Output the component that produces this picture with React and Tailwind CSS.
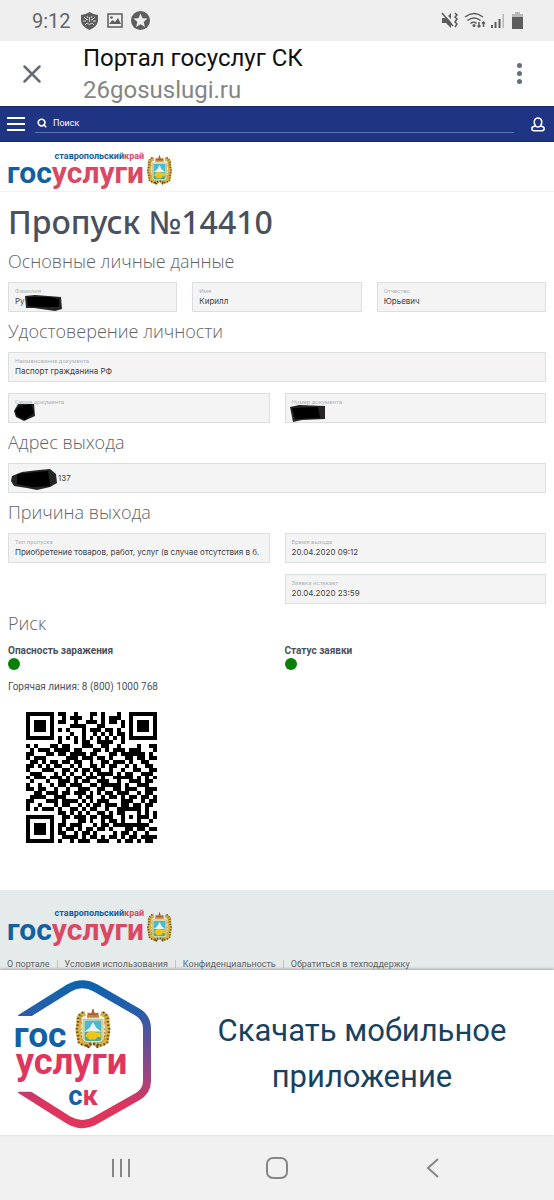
import { Search, X } from 'lucide-react'

const qrRows = [
  '111111101100100011010001001111111',
  '100000100101110010010111001000001',
  '101110101100100111010110101011101',
  '101110100001111000110000101011101',
  '101110101010001011101101001011101',
  '100000100001001001010101101000001',
  '111111101010101010101010101111111',
  '000000001000101100111100100000000',
  '101000110110001110011001000010011',
  '010111011110110001101011101110001',
  '110001101101111011000110111111010',
  '101110000011101110110100011011011',
  '011010110110110010011011101001100',
  '110101011001010011010110010100110',
  '100011100110101101100100100110011',
  '011100010101001010111101011001110',
  '101110111010110111010011111010101',
  '010001001110101100111001001110110',
  '100100101101110011011111010011100',
  '110110010010011100110011011100111',
  '001101110110111010101101110010110',
  '011110011100010110010110101101101',
  '110001110111101010111000111001011',
  '100100010110010101101110110110110',
  '101011101001101011001001111110100',
  '000000001101010100110101100010101',
  '111111100110111011011100101011101',
  '100000100100011010010110100010010',
  '101110101101110001011011111111100',
  '101110101011010110110100011011011',
  '101110101100101101000010110100100',
  '100000100111101011010110101101111',
  '111111101001011100111001011010110',
]

const links = ['О портале', 'Условия использования', 'Конфиденциальность', 'Обратиться в техподдержку']

function Emblem({ className, x, y, width, height }) {
  return (
    <svg className={className} x={x} y={y} width={width} height={height} viewBox="2 1 46 57" preserveAspectRatio="none" aria-hidden="true">
      <g fill="none" stroke="#d9b24a" strokeWidth="7">
        <path d="M15 8C2 11 9 20 6 27C4 35 8 41 8 46C10 53 16 50 22 55" />
        <path d="M35 8C48 11 41 20 44 27C46 35 42 41 42 46C40 53 34 50 28 55" />
      </g>
      <g fill="none" stroke="#5a4a20" strokeWidth="3" strokeDasharray="2 3">
        <path d="M12 6C2 12 8 20 4 27C3 35 8 41 5 47C9 54 15 51 21 57" />
        <path d="M38 6C48 12 42 20 46 27C47 35 42 41 45 47C41 54 35 51 29 57" />
      </g>
      <path d="M10 10q-3 6 0 12M40 10q3 6 0 12M10 29v16M40 29v16" fill="none" stroke="#8a6d25" strokeDasharray="3 2" />
      <path d="M17 14l1-8 4 2 3-6 3 6 4-2 1 8z" fill="#c4823b" />
      <path d="M19 9h12M25 2v5" stroke="#a75635" strokeWidth="2" />
      <path d="M12 16h26v29q0 4-5 4h-5l-3 3-3-3h-5q-5 0-5-4z" fill="#f5edb4" stroke="#a9974c" />
      <path d="M14 18h22v16H14z" fill="#4cb8d2" />
      <path d="M14 34l7-6 4-8 4 8 7 6z" fill="#e7f5ee" />
      <path d="M14 34h22v11q0 2-4 2H18q-4 0-4-2z" fill="#49ad96" />
      <path d="M15 40l3-5 5-2 6 2h6v7l-4-1-3 4h-8l-2-3z" fill="#f1c418" />
      <path d="M16 55q9-8 18 0" fill="none" stroke="#6c5139" strokeWidth="4" strokeDasharray="3 2" />
    </svg>
  )
}

function Logo() {
  return (
    <a href="#" className="flex items-end font-[Roboto,sans-serif] font-bold">
      <span className="flex flex-col items-end">
        <span className="text-[9px] leading-[9px] text-[#14609f]">
          ставропольский<span className="text-[#da4863]">край</span>
        </span>
        <span className="text-[30px] leading-[24px] text-[#14609f]">
          гос<span className="text-[#da4863]">услуги</span>
        </span>
      </span>
      <Emblem className="w-[25px] h-[30px] ml-[3px]" />
    </a>
  )
}

function Scribble({ className, d, inner }) {
  return (
    <svg className={`absolute ${className}`} aria-hidden="true">
      <path d={d} fill="#252525" />
      <path d={inner} fill="#000" />
    </svg>
  )
}

function Field({ id, label, value, inputClass = '', children }) {
  return (
    <div className="relative h-[30px] border border-[#dcdfdf] bg-[#f4f4f4] pl-[6px] pr-1 flex flex-col justify-center">
      {label && <label htmlFor={id} className="text-[6px] leading-[8px] text-[#b0b4b8]">{label}</label>}
      <input
        id={id}
        aria-label={label ? undefined : 'Адрес выхода'}
        readOnly
        defaultValue={value}
        className={`w-full min-w-0 h-3 font-[Inter,sans-serif] text-[8px] leading-3 text-[#3f4246] bg-transparent outline-none ${inputClass}`}
      />
      {children}
    </div>
  )
}

function Heading({ children }) {
  return <h2 className="h-10 leading-[38px] font-['Open_Sans',sans-serif] font-light text-[18px] text-[#626469]">{children}</h2>
}

function StatusBar() {
  return (
    <div className="h-[41px] bg-[#efefef] text-[#5d5d5d] flex items-center pl-8 pr-[31px]">
      <span className="text-[20px] text-[#666]">9:12</span>
      <svg className="w-[17px] h-[18px] ml-[10px]" viewBox="0 0 17 18" aria-hidden="true">
        <path d="M8.500 0Q12 2.500 17 3v6q-1 6-8.500 9Q1 15 0 9V3q5-.5 8.500-3z" fill="currentColor" />
        <g fill="none" stroke="#efefef" strokeWidth="0.800">
          <path d="M3 5l3 3M14 5l-3 3M2 9h3M15 9h-3M4 13l2-2M13 13l-2-2M6 4l1 2M11 4l-1 2" />
          <path d="M5 7l2 1M12 7l-2 1M6 11q2.500 3 5 0M8.500 5v5" />
        </g>
      </svg>
      <svg className="w-4 h-[15px] ml-[9px]" viewBox="0 0 16 15" aria-hidden="true">
        <path d="M1 1h14v13H1z" fill="none" stroke="currentColor" strokeWidth="1.500" />
        <path d="M2 11l3.500-4 2.500 2 3-4 3 6z" fill="currentColor" />
        <circle cx="4.500" cy="4.500" r="1.300" fill="currentColor" />
      </svg>
      <svg className="w-[19px] h-[19px] ml-2" viewBox="0 0 19 19" aria-hidden="true">
        <circle cx="9.500" cy="9.500" r="9.500" fill="currentColor" />
        <path d="M9.500 2.500l2 4.700 5 .4-3.800 3.300 1.200 5-4.400-2.700-4.400 2.700 1.200-5-3.800-3.300 5-.4z" fill="#efefef" />
      </svg>
      <svg className="w-[82px] h-[18px] ml-auto" viewBox="0 0 82 18" aria-hidden="true">
        <path d="M1 6h4l5-5v15l-5-5H1z" fill="currentColor" />
        <path d="M2 0l13 14" stroke="#efefef" strokeWidth="2" />
        <g fill="none" stroke="currentColor" strokeWidth="1.500">
          <path d="M1 1l11 13M14 1l2 2-2 2 2 2-2 3 2 2-2 3" />
          <path d="M24 5q9-7 18 0M26.500 8.500q6.500-5 13 0M29.500 11.500q3.500-2.500 6 0" />
          <path d="M38 10v5M36.500 13.500L38 15l1.500-1.500M42.500 15v-5M41 11.500l1.500-1.500 1.500 1.500" />
        </g>
        <circle cx="33" cy="13.500" r="1.500" fill="currentColor" />
        <path d="M50 13h2v3h-2zM53.500 10h2v6h-2zM57.500 7h2v9h-2zM71 5h11v12H71z" fill="currentColor" />
        <path d="M61.500 2h1.500v14h-1.500zM74 0h5v2h3v3H71V2h3z" fill="#b8b8b8" />
      </svg>
    </div>
  )
}

function QrCode() {
  return (
    <svg className="w-[131px] h-[131px]" viewBox="0 0 33 33" shapeRendering="crispEdges" role="img">
      {qrRows.map((row, y) =>
        row.split('').map((cell, x) => cell === '1' && <rect key={`${x}-${y}`} x={x} y={y} width="1" height="1" />)
      )}
    </svg>
  )
}

function AppIcon() {
  return (
    <svg className="w-[170px] h-[165px] flex-shrink-0" viewBox="0 12 510 495" aria-hidden="true">
      <defs>
        <linearGradient id="hex" gradientUnits="userSpaceOnUse" x1="0" y1="48" x2="0" y2="485">
          <stop offset="0" stopColor="#0d63ad" />
          <stop offset="0.200" stopColor="#275ea9" />
          <stop offset="0.650" stopColor="#a1447f" />
          <stop offset="0.850" stopColor="#dd355d" />
          <stop offset="1" stopColor="#e0355c" />
        </linearGradient>
        <clipPath id="cut">
          <path d="M0 0h510v510H0V377h130V150H0z" />
        </clipPath>
      </defs>
      <path
        d="M60 158L207 66Q247 43 287 66L412 138Q441 155 441 188V345Q441 376 412 392L287 463Q247 486 207 463L60 370"
        fill="none" stroke="url(#hex)" strokeWidth="24" clipPath="url(#cut)"
      />
      <Emblem x="226" y="128" width="106" height="120" />
      <g className="font-[Roboto,sans-serif] font-bold">
        <text x="41" y="242" fontSize="106" fill="#1261a6">гос</text>
        <text x="47" y="325" fontSize="109" fill="#e0355c">услуги</text>
        <text x="205" y="418" fontSize="82" fill="#1261a6">с<tspan fill="#e0355c">к</tspan></text>
      </g>
    </svg>
  )
}

export default function App() {
  return (
    <div className="min-h-screen flex flex-col bg-white font-[Roboto,sans-serif]">
      <StatusBar />

      <header className="h-[65px] flex items-center pl-5 pr-6">
        <button aria-label="Закрыть" className="text-[#656e78]">
          <X className="w-6 h-6 scale-125" strokeWidth={2} />
        </button>
        <div className="ml-[39px]">
          <p className="text-[24px] leading-8 text-[#111]">Портал госуслуг СК</p>
          <p className="text-[24px] leading-8 text-[#858585]">26gosuslugi.ru</p>
        </div>
        <button aria-label="Меню браузера" className="ml-auto flex flex-col gap-[3px] p-2">
          {[0, 1, 2].map((i) => <span key={i} className="w-[5px] h-[5px] rounded-full bg-[#656e78]" />)}
        </button>
      </header>

      <nav className="h-9 bg-[#1f3584] border-y border-[#1b2b68] flex items-center pl-[7px] pr-[9px] text-white">
        <button aria-label="Меню" className="flex flex-col gap-[4px] w-[18px]">
          {[0, 1, 2].map((i) => <span key={i} className="h-[2px] bg-white" />)}
        </button>
        <div className="flex-1 flex items-center ml-[10px] mr-[17px] h-[18px] border-b border-[#5d70b4] pb-[1px]">
          <Search className="w-[10px] h-[10px] ml-[2px]" strokeWidth={4} />
          <input aria-label="Поиск" placeholder="Поиск" className="flex-1 min-w-0 ml-[6px] text-[9px] leading-3 bg-transparent outline-none placeholder:text-white" />
        </div>
        <button aria-label="Профиль">
          <svg className="w-[14px] h-[15px]" viewBox="0 0 14 15" fill="none" stroke="white" strokeWidth="1.500">
            <path d="M4.500 9Q2.800 6.500 3.300 4Q4 1 7 1T10.700 4Q11.200 6.500 9.500 9Q13.200 9.500 13.200 11.500Q13.200 13.700 11 13.700H3Q.8 13.700 .8 11.500Q.8 9.500 4.500 9Q7 11 9.500 9" />
          </svg>
        </button>
      </nav>

      <div className="h-[50px] border-b border-[#f2f2f2] flex items-end px-[7px] pb-[6px]">
        <Logo />
      </div>

      <main className="px-2 text-[#4b505b]">
        <h1 className="pt-[10px] font-['Noto_Sans',sans-serif] text-[32px] leading-10 font-medium text-[#4a5060]">Пропуск №14410</h1>
        <Heading>Основные личные данные</Heading>
        <div className="grid grid-cols-3 gap-[15px]">
          <Field id="surname" label="Фамилия" value="Ру">
            <Scribble className="left-[14px] top-[11px] w-10 h-[18px]" d="M2 2L12 1 38 3 39 15 32 17 11 14 3 14z" inner="M4 3L28 3 36 5 36 13 16 13 5 12z" />
          </Field>
          <Field id="name" label="Имя" value="Кирилл" />
          <Field id="patronymic" label="Отчество" value="Юрьевич" />
        </div>

        <Heading>Удостоверение личности</Heading>
        <div className="grid grid-cols-2 gap-x-[15px] gap-y-[11px]">
          <div className="col-span-2">
            <Field id="document" label="Наименование документа" value="Паспорт гражданина РФ" />
          </div>
          <Field id="series" label="Серия документа" value="">
            <Scribble className="left-[5px] top-[9px] w-6 h-[19px]" d="M4 1L20 1 21 13 10 18 2 14 0 8z" inner="M5 3L17 1 20 10 11 17 3 13 1 8z" />
          </Field>
          <Field id="number" label="Номер документа" value="">
            <Scribble className="left-[4px] top-[11px] w-9 h-[18px]" d="M0 2L9 0 35 1 35 14 12 15 3 17z" inner="M2 3L28 2 30 13 5 14z" />
          </Field>
        </div>

        <Heading>Адрес выхода</Heading>
        <Field id="address" value="137" inputClass="pl-[43px]">
          <Scribble className="left-[1px] top-[5px] w-12 h-[22px]" d="M2 7L12 3 29 1 40 0 46 5 47 14 40 18 27 21 17 19 4 17 1 12z" inner="M7 5L38 2 40 17 22 18 7 15z" />
        </Field>

        <Heading>Причина выхода</Heading>
        <div className="grid grid-cols-2 gap-x-[15px] gap-y-[11px]">
          <Field id="type" label="Тип пропуска" value="Приобретение товаров, работ, услуг (в случае отсутствия в б." />
          <Field id="start" label="Время выхода" value="20.04.2020 09:12" />
          <div className="col-start-2">
            <Field id="end" label="Заявка истекает" value="20.04.2020 23:59" />
          </div>
        </div>

        <Heading>Риск</Heading>
        <div className="grid grid-cols-2 gap-x-[15px] text-[10px] leading-[14px] font-bold">
          {['Опасность заражения', 'Статус заявки'].map((title) => (
            <div key={title}>
              {title}
              <span className="block w-3 h-3 rounded-full bg-[#068006]" />
            </div>
          ))}
        </div>
        <p className="mt-[10px] text-[10px] leading-[14px]">Горячая линия: 8 (800) 1000 768</p>
        <div className="mt-[18px] ml-[18px] mb-[47px]">
          <QrCode />
        </div>
      </main>

      <footer className="bg-[#e5eaea] px-[7px] pt-[19px]">
        <Logo />
        <ul className="flex mt-4 text-[9px] leading-[12px] text-[#5e6365] whitespace-nowrap">
          {links.map((link, i) => (
            <li key={link} className="flex items-center">
              {i > 0 && <span className="w-px h-2 mx-[7px] bg-[#bfc4c5]" />}
              <a href="#">{link}</a>
            </li>
          ))}
        </ul>
      </footer>

      <a href="#" className="relative flex items-center bg-white shadow-[0_-1px_3px_rgba(0,0,0,0.3)]">
        <AppIcon />
        <span className="flex-1 px-6 pt-[2px] text-center text-[31px] leading-[46px] text-[#17425f]">Скачать мобильное приложение</span>
      </a>

      <div className="h-[65px] bg-[#f1f1f1] flex items-center justify-between px-[110px] text-[#868686]">
        <button aria-label="Недавние">
          <svg className="w-[22px] h-[22px]" viewBox="0 0 22 22" stroke="currentColor" strokeWidth="2">
            <path d="M3 2v18M11 2v18M19 2v18" />
          </svg>
        </button>
        <button aria-label="Домой" className="w-[22px] h-[22px] rounded-[7px] border-2 border-[#868686]" />
        <button aria-label="Назад">
          <svg className="w-[22px] h-[22px]" viewBox="0 0 22 22" fill="none" stroke="currentColor" strokeWidth="2">
            <path d="M16 2L6 11l10 9" />
          </svg>
        </button>
      </div>
    </div>
  )
}
